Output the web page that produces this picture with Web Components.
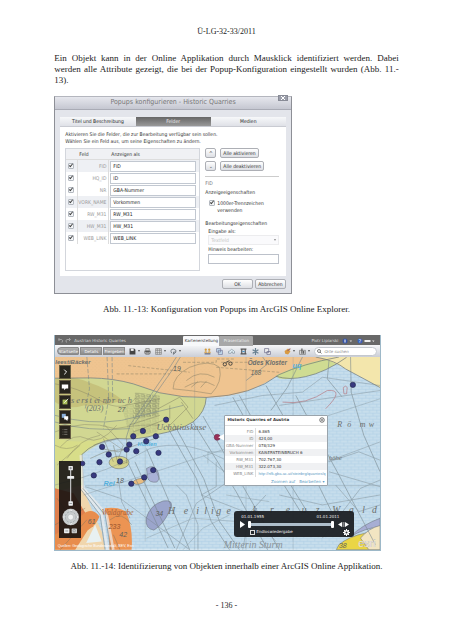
<!DOCTYPE html>
<html lang="de">
<head>
<meta charset="utf-8">
<title>Ü-LG-32-33/2011</title>
<style>
html{background:#fff}
body{margin:0;font-family:"Liberation Serif","Times New Roman",serif;color:#222}
</style>
</head>
<body>
<report-page>
  <span slot="head">Ü-LG-32-33/2011</span>
  <span slot="line1">Ein Objekt kann in der Online Applikation durch Mausklick identifiziert werden. Dabei</span>
  <span slot="line2">werden alle Attribute gezeigt, die bei der Popup-Konfiguration eingestellt wurden (Abb. 11.-</span>
  <span slot="line3">13).</span>
  <config-dialog slot="fig1"></config-dialog>
  <span slot="cap1">Abb. 11.-13: Konfiguration von Popups im ArcGIS Online Explorer.</span>
  <map-app slot="fig2"></map-app>
  <span slot="cap2">Abb. 11.-14: Identifizierung von Objekten innerhalb einer ArcGIS Online Applikation.</span>
  <span slot="foot">- 136 -</span>
</report-page>
<script>
function define(name, html, setup){
  const t=document.createElement('template');
  t.innerHTML=html;
  customElements.define(name,class extends HTMLElement{
    constructor(){
      super();
      this.attachShadow({mode:'open'}).append(t.content.cloneNode(true));
    }
    connectedCallback(){ if(setup) setup(this,this.shadowRoot); }
  });
}

define('report-page',`<style>
:host{display:block;box-sizing:border-box;padding:26px 12%;font-size:9px;line-height:11px}
header,footer{text-align:center;font-size:8px}
header{margin-bottom:16px}
p{margin:0 0 10px}
.j{display:block;text-align-last:justify;white-space:nowrap}
figure{margin:0}
.a{width:69%}
.b{width:95%}
figcaption{text-align:center}
.c1{margin:10px 0 20px}
.c2{margin:10px 0 28px}
</style>
<header><slot name="head"></slot></header>
<p><span class="j"><slot name="line1"></slot></span><span class="j"><slot name="line2"></slot></span><slot name="line3"></slot></p>
<figure><div class="a"><slot name="fig1"></slot></div><figcaption class="c1"><slot name="cap1"></slot></figcaption></figure>
<figure><div class="b"><slot name="fig2"></slot></div><figcaption class="c2"><slot name="cap2"></slot></figcaption></figure>
<footer><slot name="foot"></slot></footer>`);

define('ui-button',`<style>
:host{display:inline-flex}
button{flex:1;box-sizing:border-box;height:10px;padding:0 2px;font:inherit;line-height:8px;color:#333;border:1px solid #adafb5;border-radius:2px;background:linear-gradient(#fff,#dddfe4);white-space:nowrap}
</style><button type="button"><slot></slot></button>`,(h,r)=>{
  if(h.getAttribute('label')) r.querySelector('button').setAttribute('aria-label',h.getAttribute('label'));
});

const tick=`input[type=checkbox]{appearance:none;width:6px;height:6px;margin:0;border:1px solid #b4b9c0;border-radius:1px;background:#f4f6f8;box-sizing:border-box;position:relative}
input[type=checkbox]:checked::after{content:"";position:absolute;left:1px;top:-1px;width:1px;height:3px;border:solid #444;border-width:0 1px 1px 0;transform:rotate(40deg)}`;

define('field-row',`<style>
:host{display:grid;grid-template-columns:11px 32px 1fr;height:12px;align-items:center}
:host([shade]){background:#eef0f4}
${tick}
input[type=checkbox]{margin-left:2px}
label{text-align:right;padding-right:2px;color:#999;border:solid #ddd;border-width:0 1px;height:12px;line-height:12px;box-sizing:border-box}
input[type=text]{min-width:0;height:11px;box-sizing:border-box;margin:0 3px 0 1px;border:1px solid #c2c8d1;background:#fff;font:inherit;color:#222;padding:0 2px}
</style><input type="checkbox" checked><label for="v"></label><input type="text" id="v">`,(h,r)=>{
  r.querySelector('label').textContent=h.getAttribute('name');
  r.querySelector('#v').value=h.getAttribute('value');
  r.querySelector('[type=checkbox]').setAttribute('aria-label',h.getAttribute('name'));
});

define('config-dialog',`<style>
:host{display:block;font:5px/7px "DejaVu Sans Condensed","DejaVu Sans",sans-serif;color:#333;border:1px solid #8d8f96;border-top-color:#b4b6be;box-sizing:border-box;background:#e3e5eb;position:relative;padding-bottom:4px}
h2{margin:0;height:13px;font:7px/11px "DejaVu Sans Condensed","DejaVu Sans",sans-serif;color:#777;text-align:center;background:linear-gradient(#e6e7ed,#c5c7d1);border-bottom:1px solid #a9abb5;box-sizing:border-box}
.x{position:absolute;right:3px;top:-2px;width:10px;height:6px;background:#9b9eaa;border:1px solid #888b96;box-sizing:border-box;padding:0;display:flex;justify-content:center;align-items:center}
.x svg{width:4px;height:4px}
.panel{background:#fff;margin:7px 5px 3px;min-height:159px}
nav{display:grid;grid-template-columns:repeat(3,1fr)}
nav button{font:inherit;height:10px;border:0;border-bottom:1px solid #c9cbd2;background:linear-gradient(#f7f8fa,#dfe1e7);color:#222;padding:0}
nav .on{background:linear-gradient(#666,#999);color:#eee}
p{margin:4px 5px 3px;white-space:nowrap}
.cols{display:grid;grid-template-columns:135px 1fr;gap:5px;margin:0 7px 0 5px}
.list{border:1px solid #d3d6dc;height:123px;box-sizing:border-box}
.hd{display:grid;grid-template-columns:11px 32px 1fr;line-height:10px;background:#f0f1f4;border-bottom:1px solid #ddd}
.hd b{font-weight:400;padding-left:2px}
.r{display:flex;flex-direction:column;white-space:nowrap}
.row{display:flex;gap:4px;margin:0 0 3px}
.row ui-button:first-child{width:11px}
hr{width:100%;border:0;border-top:1px solid #ccc;margin:2px 0 2px}
.t{color:#777;line-height:8px}
h3{font:inherit;margin:0;line-height:10px}
${tick}
.chk{display:flex;gap:2px;margin:3px 0 4px 4px;line-height:7px}
.in{padding-left:3px;display:flex;flex-direction:column}
select,.in input{font:inherit;height:10px;border:1px solid #e4e5e8;color:#aaa;background:#f8f9fb;padding:0 2px;appearance:none;box-sizing:border-box;width:100%}
.sel{position:relative;display:block;height:10px;margin-bottom:1px}
.sel::after{content:"";position:absolute;right:3px;top:4px;border:solid transparent;border-width:2px 1px 0;border-top-color:#888}
.in input{border-color:#bcc1ca;background:#fff;margin-top:1px}
footer{display:flex;justify-content:flex-end;gap:2px;padding-right:5px}
footer ui-button{width:31px}
</style>
<h2>Popups konfigurieren - Historic Quarries</h2>
<button class="x" type="button" aria-label="Schließen"><svg viewBox="0 0 4 4"><path d="M0 0l4 4M4 0l-4 4" stroke="#fff"/></svg></button>
<div class="panel">
<nav><button type="button">Titel und Beschreibung</button><button type="button" class="on">Felder</button><button type="button">Medien</button></nav>
<p>Aktivieren Sie die Felder, die zur Bearbeitung verfügbar sein sollen.<br>Wählen Sie ein Feld aus, um seine Eigenschaften zu ändern.</p>
<div class="cols">
<div class="list"><div class="hd"><i></i><b>Feld</b><b>Anzeigen als</b></div>
<field-row shade name="FID" value="FID"></field-row>
<field-row name="HQ_ID" value="ID"></field-row>
<field-row name="NR" value="GBA-Nummer"></field-row>
<field-row shade name="VORK_NAME" value="Vorkommen"></field-row>
<field-row name="RW_M31" value="RW_M31"></field-row>
<field-row shade name="HW_M31" value="HW_M31"></field-row>
<field-row name="WEB_LINK" value="WEB_LINK"></field-row>
</div>
<div class="r">
<div class="row"><ui-button label="Nach oben">^</ui-button><ui-button>Alle aktivieren</ui-button></div>
<div class="row"><ui-button label="Nach unten">⌄</ui-button><ui-button>Alle deaktivieren</ui-button></div>
<hr>
<div class="t">FID</div>
<h3>Anzeigeeigenschaften</h3>
<div class="chk"><input type="checkbox" id="th" checked><label for="th">1000er-Trennzeichen<br>verwenden</label></div>
<h3>Bearbeitungseigenschaften</h3>
<div class="in"><label for="s">Eingabe als:</label><span class="sel"><select id="s" disabled><option>Textfeld</option></select></span>
<label for="h">Hinweis bearbeiten:</label><input id="h" type="text"></div>
</div></div></div>
<footer><ui-button>OK</ui-button><ui-button>Abbrechen</ui-button></footer>`);

const mapSvg=`<svg viewBox="14 84 980 581" preserveAspectRatio="none" aria-hidden="true">
<defs>
<pattern id="brick" width="22" height="18" patternUnits="userSpaceOnUse"><path d="M0 1H22M0 10H22M5 1V10M16 10V19" stroke="#a0c6df" stroke-width="1.2" fill="none"/></pattern>
<pattern id="dots" width="11" height="11" patternUnits="userSpaceOnUse"><path d="M2 2h2M7 7h2" stroke="#a58d55" stroke-width="1.2" opacity=".35"/></pattern>
<pattern id="houses" width="17" height="15" patternUnits="userSpaceOnUse"><path d="M2 2h9v6h-9zM13 3v9M0 13h17" stroke="#5b5f52" stroke-width="1.6" fill="none"/></pattern>
</defs>
<rect x="14" y="84" width="980" height="581" fill="#c7deec"/>
<rect x="14" y="84" width="980" height="581" fill="url(#brick)"/>
<path d="M14 84H870Q760 105 690 137Q610 190 540 200Q500 207 470 206Q390 207 330 192L250 165Q190 148 120 147L14 148Z" fill="#efc490"/>
<path d="M14 84H500L470 206Q390 207 330 192L250 165Q190 148 120 147L14 148Z" fill="url(#dots)"/>
<path d="M680 140Q750 105 820 92L893 85Q830 130 770 143Q720 153 690 149Z" fill="#cfdc92"/>
<path d="M800 84H994V176Q930 140 890 120Q845 92 800 84Z" fill="#f3e6ac"/>
<path d="M14 148L120 147Q190 148 250 165L330 192Q400 208 470 206Q468 250 430 280Q390 305 320 318Q270 335 200 330Q130 340 95 378L100 500L14 500Z" fill="#d1d792"/>
<path d="M14 150Q70 140 115 160Q175 180 220 215Q150 235 100 230Q50 245 14 220Z" fill="#bdb069" opacity=".55"/>
<path d="M14 330Q90 350 180 325L95 378L98 400L14 400Z" fill="#dcdf86" opacity=".7"/>
<path d="M255 190L330 200L325 260L250 272Z" fill="url(#houses)" opacity=".65"/>
<path d="M215 235L330 210L325 310L240 325Z" fill="url(#houses)" opacity=".3"/>
<path d="M14 490L96 470Q125 550 155 610L165 665H14Z" fill="#f0d6ad"/>
<path d="M14 480L70 495L130 595Q70 610 14 640Z" fill="#de7f4e"/>
<path d="M96 560Q125 535 148 565Q140 590 112 607L75 665H14V620Q60 590 96 560Z" fill="#e88d4d"/>
<path d="M164 540Q205 535 228 550Q250 600 245 665H178Q180 610 164 540Z" fill="#ec9453"/>
<path d="M135 590L155 640L108 645Z" fill="#e8f1f2"/>
<g stroke="#69717a" stroke-width="1.6">
<path d="M289 570Q300 530 340 518Q373 513 363 540Q342 590 312 606Q285 602 289 570Z" fill="#9ba5cc"/>
<path d="M290 420Q310 407 322 425Q334 450 321 461Q298 464 293 448Z" fill="#a9b1d6"/>
<ellipse cx="207" cy="402" rx="30" ry="19" fill="#d4d38d"/>
<path d="M250 460Q255 450 288 449Q291 460 270 467Q252 471 250 460Z" fill="#e9bd80"/>
<path d="M870 650Q900 625 950 615L994 610V665H862Z" fill="#ead545"/>
<path d="M905 625Q940 590 994 570V595Q950 600 905 625Z" fill="#a7aed4"/>
<path d="M935 630Q960 600 994 592V665H960Z" fill="#f2e5c2"/>
</g>
<g fill="none" stroke="#6a7274" stroke-width="2">
<path d="M14 148L120 147Q190 148 250 165L330 192Q400 208 470 206Q610 200 690 137Q760 105 870 84M470 206Q468 250 430 280Q390 305 320 318Q270 335 200 330Q130 340 95 378L100 480"/>
<path d="M800 84Q860 95 890 120L994 176M680 142Q720 155 770 143Q830 130 893 85"/>
</g>
<g fill="none" stroke="#76848b" stroke-width="2.4" opacity=".7">
<path d="M110 84L118 180L105 240M171 84L176 210L160 300M186 84L188 215" stroke-dasharray="13 5"/>
<path d="M100 480L170 560L190 665M94 480L155 560L172 665M92 380L98 480" stroke="#eee" stroke-width="8"/>
<path d="M98 480L165 560L182 665M91 482L150 560L165 665"/>
<path d="M380 84L360 115L240 290L228 330M392 84L370 120L250 290"/>
<path d="M14 260Q120 290 215 275L400 230M14 280Q110 310 240 300"/>
<path d="M14 470Q180 430 300 360Q400 330 520 390Q660 480 820 405L994 340" stroke-width="1.6"/>
<path d="M100 500L994 210M105 472H994" stroke-width="1.4"/>
<path d="M286 350V640M435 84V665M590 84V665M732 84V260M732 470V665" stroke-width="1"/>
<path d="M235 405L285 510L355 660M255 400L305 510L375 660M350 290L440 450L485 580L540 665M372 285L462 450L510 580L570 665"/>
<path d="M290 360L420 665M430 280L560 490L655 665M460 262L590 490L690 665"/>
<path d="M550 205L655 390L760 560M570 200L675 390L780 560M650 170L735 320L850 555M740 200L870 440L980 650"/>
<path d="M905 84L907 190L945 320L994 430M840 95L835 150L880 205"/>
<path d="M495 230L640 200L760 190L820 145L994 170M690 230L994 185" stroke-width="1.7"/>
<path d="M760 84L715 175L665 245M640 84L655 105L590 155"/>
<path d="M105 475L210 510L420 665M205 450L215 520L240 570M380 665L440 525L550 450M445 665V590L410 500L380 470" stroke-width="1.8"/>
<path d="M500 400L500 475L455 500L610 560L680 640M650 500L600 555L580 665M690 500L820 530L994 500" stroke-width="1.8"/>
<path d="M840 430L994 475M840 400L930 370L994 395M860 470L930 550L994 530M820 630L935 480L994 455" stroke-width="1.8"/>
<path d="M460 380L525 430M475 405V370H520M530 500L660 520M540 560L460 600L400 665M290 630L430 570L560 580" stroke-width="1.4"/>
</g>
<g fill="none" stroke="#75725d" stroke-width="1.8" opacity=".7">
<path d="M370 180Q370 140 420 115Q480 90 510 115Q520 160 485 195Q430 185 370 180ZM410 155Q450 120 495 145M405 175Q455 145 495 170M425 175l20-17m8 18l18-20"/>
<path d="M14 165Q80 175 150 215T260 205M14 310Q100 270 195 300Q280 285 330 290M30 355Q70 310 110 330T200 290M50 390Q90 330 150 320M14 350Q50 370 82 350M20 410L90 350M130 350L205 330M140 310L220 365M165 290L220 350L205 390" stroke-width="1.5"/>
<path d="M200 135H360M235 110L420 130M400 100H500V90H555M515 100h80M500 115L690 130" stroke-dasharray="9 5"/>
<path d="M325 240L390 205L415 235L360 290M360 230V270M395 220L430 270M225 230L330 210M235 290L330 260M250 310L340 275" />
<path d="M150 360L205 370L270 345L330 325M120 390L165 370L235 360M190 350L205 410L235 400M160 330L190 400M230 330V405"/>
<path d="M14 590L105 540M30 665L110 575M20 510L80 595M180 575Q215 545 245 590M190 620L210 665"/>
</g>
<g stroke="#333" stroke-width="2.5" fill="none"><circle cx="526" cy="106" r="5"/><circle cx="543" cy="104" r="5"/><path d="M530 100l10-5"/></g>
<path d="M883 176q8-8 12 0l-2 19h-8zM830 240Q890 180 835 185Q770 230 700 220" fill="none" stroke="#b57780" stroke-width="2"/>
<g font-family="Liberation Serif,serif" font-style="italic" fill="#6b6e6c" font-size="24">
<text x="15" y="105" font-size="18" font-weight="bold" font-family="Liberation Sans,sans-serif">leestiBäcker</text>
<text x="62 78 93 104 118 132 142 158 170 186 203 216 233" y="224" font-size="25">sersteinbruch</text>
<text x="108" y="248">(203)</text>
<text x="320" y="303" font-size="28">Uchatiuskase</text>
<text x="595" y="108" font-size="19" font-weight="bold" font-family="Liberation Sans,sans-serif">Ödes Kloster</text>
<text x="865 895 933 960" y="296" font-size="24">Römw</text>
<text x="355 402 440 464 484 500 531" y="556" font-size="30">Heilige</text>
<text x="610 662 710 758 800 850 900 940 970" y="555" font-size="29">kreuzWald</text>
<text x="155" y="559" font-size="22" fill="#a66038">Waldgrube</text>
<text x="523" y="660" font-size="30" fill="#8a949a">Mitterin Sturm</text>
<text x="840" y="394" font-size="20">höhe</text>
</g>
<g font-family="Liberation Sans,sans-serif" fill="#5d615c" font-size="21" font-style="italic">
<text x="203" y="250">27</text><text x="370" y="125">19</text><text x="604" y="138" font-size="19">168</text><text x="198" y="465">18</text><text x="317" y="563">34</text><text x="208" y="626">42</text><text x="176" y="603" fill="#96502b">233</text><text x="113" y="589">61</text><text x="870" y="660">38</text>
</g>
<g font-family="Liberation Sans,sans-serif" fill="#55b0dc" font-size="22" font-style="italic" font-weight="bold"><text x="160" y="473">Rei</text><text x="263" y="353" font-size="17">Höhlen</text><text x="730" y="116">uq</text></g>
<g fill="#37397f" stroke="#22264f" stroke-width="2"><circle cx="349" cy="273" r="8"/><circle cx="279" cy="307" r="8"/><circle cx="250" cy="323" r="8"/><circle cx="318" cy="323" r="8"/><circle cx="289" cy="338" r="8"/><circle cx="238" cy="348" r="8"/><circle cx="230" cy="363" r="8"/><circle cx="259" cy="368" r="8"/><circle cx="326" cy="373" r="8"/><circle cx="156" cy="355" r="8"/><circle cx="176" cy="378" r="8"/><circle cx="148" cy="401" r="8"/><circle cx="131" cy="441" r="8"/><circle cx="210" cy="399" r="8"/><circle cx="310" cy="425" r="8"/><circle cx="283" cy="447" r="8"/><circle cx="244" cy="466" r="8"/><circle cx="97" cy="405" r="7"/><circle cx="912" cy="168" r="8"/></g>
<circle cx="503" cy="326" r="9" fill="#9a2f57" stroke="#673050" stroke-width="2"/>
<path d="M506 326L526 315V337Z" fill="#fff"/>
<text x="22" y="658" font-family="Liberation Sans,sans-serif" font-size="11" fill="#fff">Quellen: Geologische Bundesanstalt, BEV, Esri</text>
<text x="928" y="656" font-family="Liberation Sans,sans-serif" font-size="33" fill="#fff" stroke="#888" stroke-width=".7">esri</text>
</svg>`;

define('map-canvas',`<style>:host{display:block;position:relative;aspect-ratio:980/581;overflow:hidden}svg{display:block;width:100%;height:100%}</style>${mapSvg}<slot></slot>`);

define('map-tools',`<style>
:host{display:flex;flex-direction:column;gap:1px}
button{border:1px solid #665d43;background:#28251e;padding:1px;height:14px;width:12px;box-sizing:border-box}
button:first-child{height:9px}
svg{display:block;width:100%;height:100%}
</style>
<button type="button" aria-label="Einblenden"><svg viewBox="0 0 10 10"><path d="M4 2l3 3-3 3" fill="none" stroke="#fff" stroke-width="1.2"/></svg></button>
<button type="button" aria-label="Notiz"><svg viewBox="0 0 10 10"><path d="M1 2h8v5H6L4 9V7H1z" fill="#fff"/></svg></button>
<button type="button" aria-label="Bearbeiten"><svg viewBox="0 0 10 10"><path d="M2 2h6v6H2z" fill="#a8bc58"/><path d="M4 6l5-5" stroke="#fff"/></svg></button>
<button type="button" aria-label="Kommentare"><svg viewBox="0 0 10 10"><path d="M1 1h5v5H1z" fill="#89aeda"/><path d="M4 4h5v4H8v2L6 8H4z" fill="#fff"/></svg></button>
<button type="button" aria-label="Legende"><svg viewBox="0 0 10 10"><path d="M2 2h1M2 5h1M2 8h1M4 2h4M4 5h4M4 8h4" stroke="#827f77"/></svg></button>`);

define('map-nav',`<style>
:host{display:block;background:rgba(18,16,16,.88)}
svg{display:block;width:100%;height:100%}
</style><svg viewBox="0 0 72 235" role="img" aria-label="Kartennavigation"><path d="M37 18V130" stroke="#e6e9ec" stroke-width="3"/>
<g fill="#eceeef"><rect x="30" y="11" width="14" height="14" rx="2"/><rect x="26" y="43" width="22" height="9" rx="2"/><rect x="30" y="123" width="14" height="14" rx="2"/><rect x="16" y="209" width="17" height="15" rx="2"/><rect x="40" y="209" width="17" height="15" rx="2" fill="#c8cacb"/></g>
<path d="M33 18h8M37 14v8M33 130h8M20 217h9" stroke="#65696c" stroke-width="2"/><circle cx="48" cy="216" r="4" fill="none" stroke="#777" stroke-width="1.5"/>
<circle cx="37" cy="173" r="26" fill="#c9cccd"/><circle cx="37" cy="173" r="17" fill="none" stroke="#90999c" stroke-width="2" stroke-dasharray="7 4"/><circle cx="37" cy="173" r="9" fill="#f0f1f1" stroke="#8c9497"/><path d="M33 154l4-4 4 4M33 192l4 4 4-4M18 169l-4 4 4 4M56 169l4 4-4 4" fill="none" stroke="#fff" stroke-width="2"/></svg>`);

define('map-popup',`<style>
:host{display:block;background:#fff;border:1px solid #9aa4ac;border-radius:1px;box-sizing:border-box;font:4px/7px "Liberation Sans",Arial,sans-serif;color:#333}
header{display:flex;justify-content:space-between;align-items:center;height:9px;padding:0 2px;border-bottom:1px solid #ddd}
h2{margin:0;font:bold 4px/8px "DejaVu Sans",sans-serif;white-space:nowrap}
button{border:0;background:none;padding:0;width:6px;height:6px}svg{display:block;width:6px;height:6px}
table{border-collapse:collapse;width:100%;margin:2px 0 0;font-family:"DejaVu Sans",sans-serif}
th,td{padding:0;height:7px;font-weight:400;white-space:nowrap}
th{width:28px;text-align:right;color:#888;padding-right:2px;border-right:1px solid #ddd}td{padding-left:2px}
tr:nth-child(even){background:#f0f1f3}
a{color:#5d9cc4;text-decoration:none}
td a{font-family:"Liberation Sans",sans-serif}
footer{display:flex;justify-content:flex-end;gap:4px;padding:1px 3px 0;line-height:7px;font-family:"DejaVu Sans",sans-serif}
</style><header><h2>Historic Quarries of Austria</h2><button type="button" aria-label="Schließen"><svg viewBox="0 0 12 12"><circle cx="6" cy="6" r="4.5" fill="#fff" stroke="#444" stroke-width="1.5"/><path d="M4 4l4 4M8 4l-4 4" stroke="#444"/></svg></button></header>
<table><tr><th>FID</th><td>6.865</td></tr><tr><th>ID</th><td>424,00</td></tr><tr><th>GBA-Nummer</th><td>078/329</td></tr><tr><th>Vorkommen</th><td>KAISERSTEINBRUCH 6</td></tr><tr><th>RW_M31</th><td>702.767,30</td></tr><tr><th>HW_M31</th><td>322.073,30</td></tr><tr><th>WEB_LINK</th><td><a href="#q">http://nfk.gba.ac.at/steinbrg/quarries/q</a></td></tr></table>
<footer><a href="#z">Zoomen auf</a><a href="#b">Bearbeiten ▾</a></footer>`);

define('time-slider',`<style>
:host{display:block;background:rgba(28,32,36,.95);border-radius:3px;box-sizing:border-box;color:#f2f2f2;font:4px/6px "DejaVu Sans",sans-serif;padding:3px 4px 1px 6px}
.d{display:flex;justify-content:space-between;padding:0 11px 0 1px}
.t{display:flex;align-items:center;gap:3px;height:8px}
button{border:0;background:none;padding:0;height:7px;display:block}
svg{display:block;height:100%}
.bar{flex:1;height:3px;background:#aebecb;position:relative}
.bar::before,.bar::after{content:"";position:absolute;top:-2px;width:3px;height:7px;background:#fff;border-radius:1px}
.bar::before{left:0}.bar::after{right:0}
.b{display:flex;justify-content:space-between;align-items:center;height:8px;padding-left:10px}
label{display:flex;align-items:center;gap:1px}
input{appearance:none;width:5px;height:5px;border:1px solid #ddd;margin:0;box-sizing:border-box}
</style><div class="d"><span>01.01.1955</span><span>01.01.2011</span></div>
<div class="t"><button type="button" aria-label="Abspielen"><svg viewBox="0 0 5 7"><path d="M0 0L5 3.500L0 7Z" fill="#fff"/></svg></button><div class="bar"></div><button type="button" aria-label="Schritt"><svg viewBox="0 0 13 7"><path d="M5 1v5L1 3.500zM8 1v5l4-2.500z" fill="#fff"/><path d="M6 1v5M7 1v5" stroke="#ddd" stroke-width=".6"/></svg></button></div>
<div class="b"><label><input type="checkbox">Endloswiedergabe</label><button type="button" aria-label="Einstellungen"><svg viewBox="0 0 14 14"><circle cx="7" cy="7" r="3.500" fill="none" stroke="#fff" stroke-width="3"/><path d="M7 0v3M7 11v3M0 7h3M11 7h3M2 2l2 2M10 10l2 2M2 12l2-2M10 4l2-2" stroke="#fff" stroke-width="2"/></svg></button></div>`);

const ic={
save:'<path d="M1 1h8l2 2v8H1z" fill="#444"/><path d="M3 1h5v4H3z" fill="#eee"/>',
print:'<path d="M3 1h6v4H3zM1 5h10v4H1zM3 8h6v3H3z" fill="#ddd" stroke="#666"/><path d="M2 6h8" stroke="#555" stroke-width="2"/>',
grid:'<path d="M1 1h10v10H1zM4 1v10M8 1v10M1 4h10M1 8h10" fill="#ddd" stroke="#777"/>',
undo:'<path d="M3 9Q-1 2 6 2Q12 3 10 7L6 11V7h4" fill="none" stroke="#6c7479" stroke-width="1.5"/>',
people:'<circle cx="3" cy="3" r="2" fill="#d59d3e"/><circle cx="9" cy="3" r="2" fill="#d59d3e"/><path d="M0 8q3-5 6 0q3-5 6 0z" fill="#d59d3e"/><path d="M1 10h10" stroke="#667" stroke-width="2"/>',
layers:'<path d="M1 1h7v6H1zM4 4h7v7H4z" fill="#c4dff0" stroke="#668"/>',
cloud:'<path d="M1 9Q-1 5 3 5Q6 0 9 4Q13 6 11 9H8L7 6L5 9z" fill="#e1eff6" stroke="#70808c"/>',
link:'<path d="M1 2h10M1 10h10M3 3v6M9 3v6" stroke="#555" stroke-width="2"/><path d="M4 6h4" stroke="#4993c4" stroke-width="2"/>',
snow:'<path d="M6 0v12M1 3l10 6M1 9l10-6" stroke="#688090" stroke-width="2"/>',
note:'<path d="M1 1h7v7H1zM5 6h6v5H5z" fill="#eee" stroke="#557"/>',
paint:'<path d="M1 5l6-4 4 5-4 5-5-1z" fill="#d99a42"/><path d="M6 5l5-4" stroke="#966" stroke-width="2"/>',
chart:'<path d="M1 4h10v7H1z" fill="#ddd" stroke="#666"/><path d="M5 10V1M8 10V5" stroke="#555" stroke-width="2"/>'};
define('tool-icon',`<style>:host{display:inline-flex}button{display:flex;align-items:center;gap:2px;padding:0;border:0;background:none}svg{width:7px;height:7px}:host([menu]) button::after{content:"";border:solid transparent;border-width:2px 1px 0;border-top-color:#555}</style><button type="button"></button>`,(h,r)=>{
  const b=r.querySelector('button');b.setAttribute('aria-label',h.getAttribute('name'));
  b.innerHTML='<svg viewBox="0 0 12 12">'+ic[h.getAttribute('name')]+'</svg>';
});

define('map-app',`<style>
:host{display:block;font:4px/10px "DejaVu Sans",sans-serif;border:1px solid #9db8c8;border-top:0;box-sizing:border-box}
.top{display:grid;grid-template-columns:128px 36px 34px 1fr;background:#686868;color:#ddd;height:10px}
.top>*{white-space:nowrap;display:flex;align-items:center}
.l{gap:3px;padding-left:3px}.l svg{width:13px;height:6px}
.top button{font:inherit;border:0;padding:0;justify-content:center;margin-top:1px;border-radius:1px 1px 0 0}
.t1{background:#f7f8fa;color:#333}.t2{background:#a8a8a8;color:#eee}
.r{justify-content:flex-end;gap:4px;padding-right:4px}
.r svg{width:34px;height:6px}
.bar{display:flex;align-items:center;height:12px;background:linear-gradient(#f6f7f9,#cbced6);padding:0 3px 0 2px;box-sizing:border-box}
.bar .n{font:inherit;line-height:7px;height:8px;width:22px;border:1px solid #888;background:linear-gradient(#b0b0b0,#8c8c8c);color:#fff;padding:0;margin-right:1px;box-sizing:border-box}
.n:first-child{border-radius:4px 1px 1px 4px}
.g{display:flex;gap:4px;margin-left:3px;align-items:center}
.m{margin-left:23px;gap:5px}
.e{margin-left:auto;margin-right:4px}
.s{width:63px;display:flex;align-items:center;background:#fff;border:1px solid #c4c8ce;border-radius:5px;height:9px;box-sizing:border-box;padding-left:2px}
.s svg{width:5px;height:5px}
.s input{min-width:0;flex:1;border:0;background:none;font:inherit;line-height:7px;padding:0 2px;height:7px}
.s input::placeholder{color:#888;font-style:italic}
map-tools{position:absolute;left:1%;top:4%}
map-nav{position:absolute;left:1%;top:54%;width:7%;height:40%}
map-popup{position:absolute;left:52%;top:30%;width:32%}
time-slider{position:absolute;left:55%;top:80%;width:37%}
</style>
<div class="top"><span class="l"><svg viewBox="0 0 26 12"><path d="M1 3h6q4 1 1 6M3 0L0 3l3 3M24 3h-6q-4 1-1 6M22 0l3 3-3 3" fill="none" stroke="#bbb" stroke-width="1.4"/></svg>Austrian Historic Quarries</span><button class="t1" type="button">Kartenerstellung</button><button class="t2" type="button">Präsentation</button>
<span class="r">Piotr Lipiarski<svg viewBox="0 0 68 12"><circle cx="6" cy="6" r="5" fill="#3554a8"/><path d="M6 3v6" stroke="#fff" stroke-width="2"/><path d="M15 5h5l-2 3zM60 5h5l-2 3z" fill="#ddd"/><circle cx="36" cy="6" r="5" fill="#3c62b8"/><text x="33" y="10" font-size="10" fill="#fff">?</text><path d="M45 4h12v4H45z" fill="#eee"/></svg></span></div>
<div class="bar"><button class="n" type="button">Startseite</button><button class="n" type="button">Details</button><button class="n" type="button">Freigeben</button>
<span class="g"><tool-icon menu name="save"></tool-icon><tool-icon name="print"></tool-icon><tool-icon menu name="grid"></tool-icon><tool-icon menu name="undo"></tool-icon></span>
<span class="g m"><tool-icon name="people"></tool-icon><tool-icon name="layers"></tool-icon><tool-icon name="cloud"></tool-icon><tool-icon name="link"></tool-icon><tool-icon name="snow"></tool-icon><tool-icon name="note"></tool-icon></span>
<span class="g e"><tool-icon menu name="paint"></tool-icon><tool-icon menu name="chart"></tool-icon></span>
<label class="s"><svg viewBox="0 0 10 10"><circle cx="4" cy="4" r="3" fill="none" stroke="#555" stroke-width="1.5"/><path d="M6 6l3 3" stroke="#555" stroke-width="1.5"/></svg><input type="search" placeholder="Orte suchen" aria-label="Orte suchen"></label></div>
<map-canvas><map-tools></map-tools><map-nav></map-nav><map-popup></map-popup><time-slider></time-slider></map-canvas>`);
</script>
</body>
</html>
